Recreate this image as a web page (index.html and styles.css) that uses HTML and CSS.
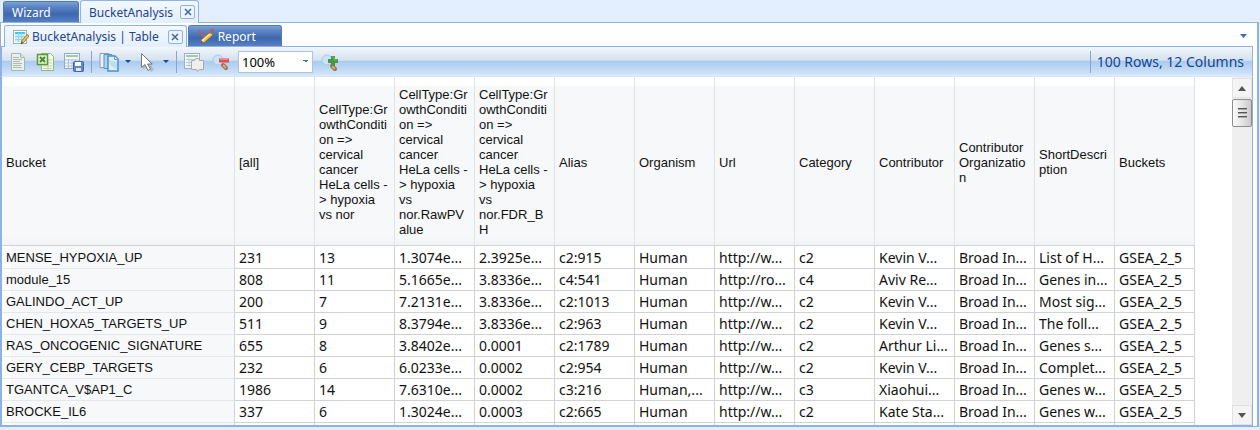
FILE: index.html
```html
<!DOCTYPE html>
<html lang="en">
<head>
<meta charset="utf-8">
<title>BucketAnalysis</title>
<link rel="stylesheet" href="styles.css">
</head>
<body>
<div class="app">
<nav class="tabs tabs-main">
  <button class="tab tab-blue tab-wizard">Wizard</button>
  <div class="tab tab-light tab-bucket"><button class="tab-label">BucketAnalysis</button><button class="close" aria-label="Close BucketAnalysis"><svg width="8" height="8" viewBox="0 0 8 8"><path d="M1 1l6 6M7 1L1 7"/></svg></button></div>
</nav>
<main class="outer">
<div class="document">
<nav class="tabs tabs-sub">
  <div class="tab tab-light tab-table">
    <svg width="16" height="16" viewBox="0 0 16 16"><rect x=".5" y="1.5" width="13" height="13" fill="#fff" stroke="#a8acb0"/><path d="M2 3h10v2H2z" fill="#41c8ee"/><path d="M2 5h10v8H2z" fill="#c9eefa"/><path d="M2 7.500h10M2 10.500h10M5.500 4v9M8.500 4v9" stroke="#8fd6ee" fill="none"/><path d="M8 14.500l1-3 5-6 2 1.500-5 6z" fill="#f3c63c" stroke="#75551d" stroke-width=".7"/><path d="M8 15l1-2 1 1z" fill="#222"/></svg>
    <button class="tab-label">BucketAnalysis | Table</button><button class="close" aria-label="Close Table"><svg width="8" height="8" viewBox="0 0 8 8"><path d="M1 1l6 6M7 1L1 7"/></svg></button></div>
  <button class="tab tab-blue tab-report"><svg width="16" height="16" viewBox="0 0 16 16"><path d="M1 4l4 4 5-4 4-2" fill="none" stroke="#b85f79"/><path d="M0 4h3M1.500 2.500v3M4 9h3M13 2h3M14.500.500v3" stroke="#ed443b"/><path d="M3 15l1-4 7-6q3-1 4 2l-8 7z" fill="#f5bd42" stroke="#865e28" stroke-width=".7"/><path d="M5 12l7-6" stroke="#ffe99b" stroke-width="1.500"/><path d="M3 15l1-4 3 2z" fill="#f8dfba"/><path d="M3 15l.500-2 1.500 1z" fill="#222"/></svg>Report</button>
  <button class="more" aria-label="Tab list"><svg width="8" height="4" viewBox="0 0 8 4"><path d="M0 0h7L3.500 4z"/></svg></button>
</nav>
<div class="toolbar">
  <button class="tool" aria-label="Text report"><svg width="20" height="20" viewBox="0 0 20 20"><path d="M3.500 1.500h9l4 4v13h-13z" fill="#eaf1ed" stroke="#a1b9ae"/><path d="M12.500 1.500v4h4" fill="#d8e7df" stroke="#a1b9ae"/><path d="M5 5.500h6M5 7.500h9M5 9.500h7M5 11.500h9M5 13.500h8M5 15.500h9" stroke="#a9bab2"/></svg></button>
  <button class="tool tool-excel" aria-label="Export to Excel"><svg width="20" height="20" viewBox="0 0 20 20"><path d="M5.500 1.500h9l3 3v14h-12z" fill="#f4faee" stroke="#91b779"/><path d="M12 8h4M12 11h4M7 14h9M7 16.500h9M12 6v12" stroke="#bdd5b0"/><rect x="1.500" y="2.500" width="10" height="10" fill="#e4f4d3" stroke="#5b993f" stroke-width="1.500"/><path d="M4 5l5 5M9 5l-5 5" stroke="#428931" stroke-width="2"/></svg></button>
  <button class="tool" aria-label="Save table"><svg width="20" height="20" viewBox="0 0 20 20"><rect x=".5" y="1.500" width="15" height="15" fill="#f2f7fc" stroke="#91abc8"/><path d="M2 3h12v2H2z" fill="#a6c9a5"/><path d="M1 8h14M1 11h14M1 14h10M4.500 7v9M8 7v9M11.500 7v5" stroke="#a9c3dc"/><rect x="9.500" y="9.500" width="10" height="10" rx="1" fill="#5f86c8" stroke="#4268a4"/><path d="M11 10h6v4h-6z" fill="#fff"/><path d="M12 16h5v3h-5z" fill="#e2e8ee"/></svg></button>
  <span class="rule"></span>
  <button class="tool tool-copy" aria-label="Copy"><svg width="20" height="20" viewBox="0 0 20 20"><path d="M1 1.500h9v14H1z" fill="#e9f1f8" stroke="#899fb5"/><path d="M5 2.500h8v14H5z" fill="#aed3ed" stroke="#5c94bc"/><path d="M9 4h7l3 3v12H9z" fill="#def0fb" stroke="#4f8fc4" stroke-width="1.500"/><path d="M15.500 4.500v3h3" fill="#fff" stroke="#6799bd"/><path d="M10 8q0 7 8 9V10z" fill="#bcdff4"/></svg></button>
  <button class="drop" aria-label="Copy options"><svg width="6" height="3" viewBox="0 0 6 3"><path d="M0 0h6L3 3z"/></svg></button>
  <button class="tool tool-pointer" aria-label="Select"><svg width="20" height="20" viewBox="0 0 20 20"><path d="M6 3l11 9-3 1 3 5-3 2-3-6-5 3z" fill="#9caab8" opacity=".65"/><path d="M4.500 1.500v14l3.500-3 3 6 2.500-1.500-3-5h4.500z" fill="#fff" stroke="#777"/></svg></button>
  <button class="drop" aria-label="Selection options"><svg width="6" height="3" viewBox="0 0 6 3"><path d="M0 0h6L3 3z"/></svg></button>
  <span class="rule"></span>
  <button class="tool" aria-label="Table comment"><svg width="20" height="20" viewBox="0 0 20 20"><rect x=".5" y="1.500" width="15" height="15" fill="#f3f7fb" stroke="#9bb1ca"/><path d="M2 3h12v2H2z" fill="#a6c9a5"/><path d="M2 7.500h12M2 10.500h8M2 13.500h7M5 6v9" stroke="#b4cadf"/><path d="M7.500 8.500h3l1-2h3l1 2h4v9h-4l-2 2-1-2h-5z" fill="#eee" stroke="#aaa"/></svg></button>
  <button class="tool tool-zoom" aria-label="Zoom out"><svg width="18" height="20" viewBox="0 0 18 20"><path d="M11 13l3 3" stroke="#9f6d47" stroke-width="4" stroke-linecap="round"/><path d="M11 13l3 3" stroke="#d7aa73" stroke-width="2"/><circle cx="6" cy="8" r="5" fill="#c9e3f8" stroke="#a9c9e8"/><path d="M7 6.500h10v4H7z" fill="#e84b4f"/><path d="M8 7.500h8" stroke="#f78683"/></svg></button>
  <select class="scale" aria-label="Zoom level"><option>100%</option></select>
  <button class="tool tool-zoom-in" aria-label="Zoom in"><svg width="18" height="20" viewBox="0 0 18 20"><path d="M11 14l3 3" stroke="#9f6d47" stroke-width="4" stroke-linecap="round"/><path d="M11 14l3 3" stroke="#d7aa73" stroke-width="2"/><circle cx="6" cy="8" r="5" fill="#c9e3f8" stroke="#a9c9e8"/><path d="M10 4h4v3h3v4h-3v3h-4v-3H7V7h3z" fill="#4b9547"/><path d="M11 5h2v3h3" fill="none" stroke="#70b965"/></svg></button>
  <span class="count">100 Rows, 12 Columns</span>
</div>
<div class="viewport">
<div class="grid-area">
<table class="grid">
<colgroup><col class="col-name"><col span="12" class="col-value"></colgroup>
<thead><tr><th>Bucket</th><th>[all]</th><th>CellType:Gr<br>owthConditi<br>on =&gt;<br>cervical<br>cancer<br>HeLa cells -<br>&gt; hypoxia<br>vs nor</th><th>CellType:Gr<br>owthConditi<br>on =&gt;<br>cervical<br>cancer<br>HeLa cells -<br>&gt; hypoxia<br>vs<br>nor.RawPV<br>alue</th><th>CellType:Gr<br>owthConditi<br>on =&gt;<br>cervical<br>cancer<br>HeLa cells -<br>&gt; hypoxia<br>vs<br>nor.FDR_B<br>H</th><th>Alias</th><th>Organism</th><th>Url</th><th>Category</th><th>Contributor</th><th>Contributor<br>Organizatio<br>n</th><th>ShortDescri<br>ption</th><th>Buckets</th></tr></thead>
<tbody>
<tr><th>MENSE_HYPOXIA_UP</th><td>231</td><td>13</td><td>1.3074e...</td><td>2.3925e...</td><td>c2:915</td><td>Human</td><td>http://w...</td><td>c2</td><td>Kevin V...</td><td>Broad In...</td><td>List of H...</td><td>GSEA_2_5</td></tr>
<tr><th>module_15</th><td>808</td><td>11</td><td>5.1665e...</td><td>3.8336e...</td><td>c4:541</td><td>Human</td><td>http://ro...</td><td>c4</td><td>Aviv Re...</td><td>Broad In...</td><td>Genes in...</td><td>GSEA_2_5</td></tr>
<tr><th>GALINDO_ACT_UP</th><td>200</td><td>7</td><td>7.2131e...</td><td>3.8336e...</td><td>c2:1013</td><td>Human</td><td>http://w...</td><td>c2</td><td>Kevin V...</td><td>Broad In...</td><td>Most sig...</td><td>GSEA_2_5</td></tr>
<tr><th>CHEN_HOXA5_TARGETS_UP</th><td>511</td><td>9</td><td>8.3794e...</td><td>3.8336e...</td><td>c2:963</td><td>Human</td><td>http://w...</td><td>c2</td><td>Kevin V...</td><td>Broad In...</td><td>The foll...</td><td>GSEA_2_5</td></tr>
<tr><th>RAS_ONCOGENIC_SIGNATURE</th><td>655</td><td>8</td><td>3.8402e...</td><td>0.0001</td><td>c2:1789</td><td>Human</td><td>http://w...</td><td>c2</td><td>Arthur Li...</td><td>Broad In...</td><td>Genes s...</td><td>GSEA_2_5</td></tr>
<tr><th>GERY_CEBP_TARGETS</th><td>232</td><td>6</td><td>6.0233e...</td><td>0.0002</td><td>c2:954</td><td>Human</td><td>http://w...</td><td>c2</td><td>Kevin V...</td><td>Broad In...</td><td>Complet...</td><td>GSEA_2_5</td></tr>
<tr><th>TGANTCA_V$AP1_C</th><td>1986</td><td>14</td><td>7.6310e...</td><td>0.0002</td><td>c3:216</td><td>Human,...</td><td>http://w...</td><td>c3</td><td>Xiaohui...</td><td>Broad In...</td><td>Genes w...</td><td>GSEA_2_5</td></tr>
<tr><th>BROCKE_IL6</th><td>337</td><td>6</td><td>1.3024e...</td><td>0.0003</td><td>c2:665</td><td>Human</td><td>http://w...</td><td>c2</td><td>Kate Sta...</td><td>Broad In...</td><td>Genes w...</td><td>GSEA_2_5</td></tr>
<tr><th></th><td></td><td></td><td></td><td></td><td></td><td></td><td></td><td></td><td></td><td></td><td></td><td></td></tr>
</tbody>
</table>
</div>
<div class="scrollbar">
  <button class="arrow" aria-label="Scroll up"><svg width="8" height="5" viewBox="0 0 8 5"><path d="M4 0l4 5H0z"/></svg></button>
  <div class="thumb"><span></span><span></span><span></span></div>
  <button class="arrow arrow-down" aria-label="Scroll down"><svg width="8" height="5" viewBox="0 0 8 5"><path d="M0 0h8L4 5z"/></svg></button>
</div>
</div>
</div>
</main>
<footer class="edge"></footer>
</div>
</body>
</html>
```
FILE: styles.css
```css
* { box-sizing: border-box; }
body { margin: 0; background: #e3efff; color: #111; font-family: "Noto Sans", "Open Sans", sans-serif; }
button { margin: 0; padding: 0; border: 0; background: none; color: inherit; font: inherit; }
svg { display: block; flex: none; }
.app { display: flex; flex-direction: column; height: 100vh; overflow: hidden; }
.tabs { display: flex; flex: none; font-size: 12px; }
.tabs-main { height: 22px; padding-left: 3px; gap: 1px; }
.tab { display: flex; align-items: center; white-space: nowrap; border-radius: 3px 3px 0 0; }
.tab-blue { margin-top: 1px; border: 1px solid #4f7abb; border-bottom: 0; background: linear-gradient(#7d9fd4, #5780c1 30%, #3d68ae 60%, #5880c2); color: #fff; }
.tab-light { border: 1px solid #8db2e6; border-bottom: 0; background: linear-gradient(#f4f8ff, #e3efff); color: #1e4590; }
.tab-wizard { width: 76px; padding-left: 8px; }
.tab-bucket { height: 23px; padding: 0 3px 0 8px; gap: 7px; z-index: 1; }
.close { display: flex; align-items: center; justify-content: center; width: 15px; height: 14px; border: 1px solid #8db2e6; border-radius: 2px; background: #edf4ff; }
.close path { fill: none; stroke: #3c68ad; stroke-width: 1.5; }
.outer { display: flex; flex: 1; min-height: 0; border: 1px solid #8db2e6; border-right: 2px solid #8db2e6; margin-right: 1px; padding-right: 4px; background: #fff; }
.document { display: flex; flex: 1; flex-direction: column; min-width: 0; }
.tabs-sub { height: 23px; padding: 2px 1px 0 3px; gap: 1px; }
.tab-table { height: 22px; padding: 0 3px 0 8px; gap: 3px; z-index: 1; }
.tab-table .close { margin-left: 6px; }
.tab-report { width: 94px; margin-top: 0; padding-left: 9px; gap: 4px; }
.more { width: 12px; margin-left: auto; }
.more path { fill: #376fb9; }
.toolbar { display: flex; align-items: center; flex: none; height: 31px; padding: 0 8px 0 6px; border: 1px solid #8db2e6; border-bottom-color: #d8e7fa; background: linear-gradient(#f3f6fa, #d5e2f1 45%, #abcbef 50%, #cce1f8 90%, #dceafa); }
.tool { flex: none; }
.tool-excel { margin: 0 8px; }
.rule { width: 1px; height: 22px; margin: 0 7px; flex: none; background: #83a6d5; }
.drop { width: 14px; height: 22px; display: flex; align-items: center; justify-content: center; margin-left: 2px; }
.drop path { fill: #17489a; }
.drop + .rule { margin-left: 3px; }
.tool-pointer { margin-left: 2px; }
.tool-zoom { margin: 0 8px; }
.scale { appearance: none; width: 75px; height: 22px; padding: 0 3px; border: 1px solid #abc5e8; border-radius: 0; background: conic-gradient(from 315deg at 50% 100%, #3a70b9 90deg, transparent 90deg) right 3px center / 6px 3px no-repeat #fff; color: #000; font: 13px "Noto Sans", sans-serif; }
.tool-zoom-in { margin-left: 8px; }
.count { height: 22px; margin-left: auto; padding-left: 6px; border-left: 1px solid #83a6d5; color: #174490; font-size: 14px; line-height: 22px; white-space: nowrap; }
.viewport { display: flex; flex: 1; min-height: 0; border: 1px solid #8db2e6; border-top: 0; }
.grid-area { flex: 1; min-width: 0; overflow: hidden; }
.grid { width: 1193px; table-layout: fixed; border-collapse: separate; border-spacing: 0; }
.col-name { width: 233px; }
.col-value { width: 80px; }
.grid th, .grid td { padding: 0 0 0 4px; border-right: 1px solid #d0d2d5; border-bottom: 1px solid #d0d2d5; text-align: left; white-space: nowrap; font-weight: 400; }
.grid td { font-size: 14px; line-height: 21px; height: 22px; }
.grid th { font-family: "Liberation Sans", sans-serif; font-size: 13px; }
.grid thead th { height: 169px; padding-top: 2px; border-right-color: #e0e2e5; line-height: 15px; background: linear-gradient(#fff 9px, #f7f8fa 9px, #f7f8fa 160px, #f2f3f4); }
.grid tbody th { line-height: 21px; background: linear-gradient(90deg, #fff 9px, #f7f8fa 9px); border-bottom-color: #e5e7ea; }
.grid tbody tr:first-child > * { height: 23px; padding-top: 1px; }
.scrollbar { display: flex; flex: none; flex-direction: column; width: 20px; padding-top: 1px; background: #efefef; }
.arrow { display: flex; align-items: center; justify-content: center; height: 20px; border: 1px solid #e1e1e1; background: #f4f4f4; }
.arrow path { fill: #555; }
.arrow-down { margin-top: auto; }
.thumb { display: flex; flex-direction: column; align-items: center; justify-content: center; gap: 2px; height: 28px; margin-top: 1px; border: 1px solid #8c8c8c; border-radius: 2px; background: linear-gradient(90deg, #fafafa, #e5e5e5 50%, #c9c9cc); }
.thumb span { width: 9px; height: 2px; border-top: 1px solid #555; background: #aaa; }
.edge { flex: none; height: 3px; background: #e3efff; }
```
